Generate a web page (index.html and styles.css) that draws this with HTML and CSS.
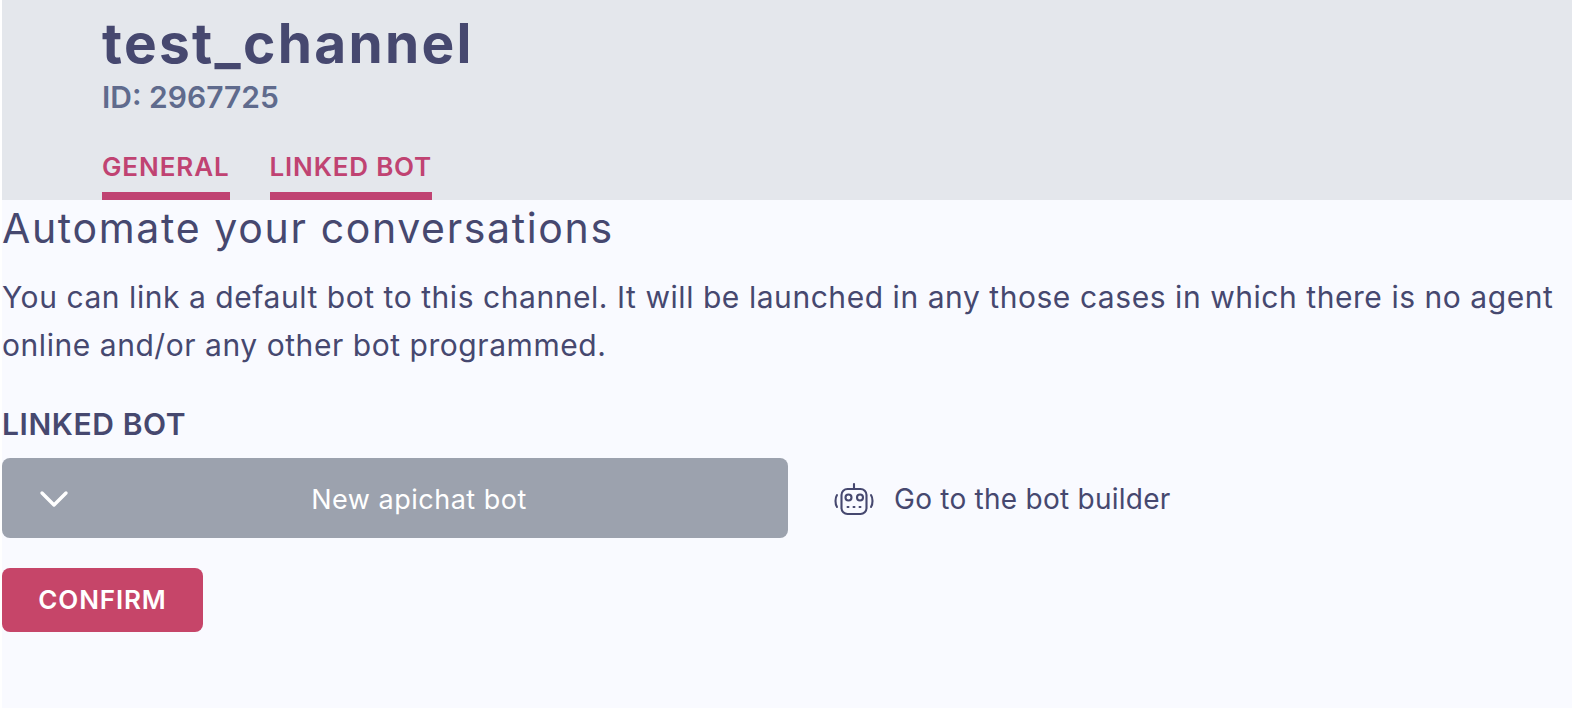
FILE: index.html
```html
<!DOCTYPE html>
<html lang="en">
<head>
<meta charset="utf-8">
<title>test_channel</title>
<link rel="stylesheet" href="styles.css">
</head>
<body>
<div class="page">
  <header class="head">
    <h1 class="title">test_channel</h1>
    <div class="id">ID: 2967725</div>
    <nav class="tabs">
      <a class="tab">GENERAL</a>
      <a class="tab">LINKED BOT</a>
    </nav>
  </header>
  <main class="content">
    <h2 class="heading">Automate your conversations</h2>
    <p class="desc">You can link a default bot to this channel. It will be launched in any those cases in which there is no agent online and/or any other bot programmed.</p>
    <div class="label">LINKED BOT</div>
    <div class="row">
      <div class="select">
        <svg class="chev" width="30" height="18" viewBox="0 0 30 18"><path d="M3 3l12 12L27 3" fill="none" stroke="#fff" stroke-width="3.4" stroke-linecap="round" stroke-linejoin="round"/></svg>
        <span class="value">New apichat bot</span>
      </div>
      <a class="builder">
        <svg class="robot" width="42" height="34" viewBox="0 0 42 34" fill="none" stroke="#46486f" stroke-width="2.1" stroke-linecap="round">
          <path d="M21 2v5"/>
          <rect x="8.500" y="7" width="25" height="25" rx="6"/>
          <circle cx="15.500" cy="15.500" r="3"/>
          <circle cx="27" cy="15.500" r="3"/>
          <path d="M14.500 25h1M20.500 25h1M26.500 25h1" stroke-width="2"/>
          <path d="M4 13c-2 3-2 9 0 12M38 13c2 3 2 9 0 12"/>
        </svg>
        <span>Go to the bot builder</span>
      </a>
    </div>
    <button class="confirm">CONFIRM</button>
  </main>
</div>
</body>
</html>
```

FILE: styles.css
```css
* { box-sizing: border-box; }
html, body { margin: 0; padding: 0; background: #fff; }
body { font-family: "Inter", "Noto Sans", sans-serif; color: #46486f; }
.page { margin-left: 2px; height: 708px; background: #f9faff; }
.head { height: 200px; background: #e4e7ec; padding: 14px 0 0 100px; display: flex; flex-direction: column; }
.title { margin: 0; font-size: 55px; line-height: 58px; font-weight: 700; color: #46486f; letter-spacing: 2.3px; }
.id { margin-top: 7px; font-size: 30px; line-height: 36px; font-weight: 600; color: #5f6b8d; }
.tabs { display: flex; gap: 40px; margin-top: auto; }
.tab { height: 52px; padding-top: 3px; border-bottom: 8px solid #c04372; color: #c04372; font-size: 26px; line-height: 32px; font-weight: 600; letter-spacing: 0.8px; }
.tab:first-child { letter-spacing: 0.9px; }
.content { padding-top: 5px; }
.heading { margin: 0; font-size: 41px; line-height: 46px; font-weight: 400; letter-spacing: 1.65px; }
.desc { margin: 22px 0 0; font-size: 30px; line-height: 48px; font-weight: 400; letter-spacing: 0.55px; }
.label { margin-top: 38px; font-size: 30px; line-height: 34px; font-weight: 600; letter-spacing: 0.6px; }
.row { display: flex; align-items: center; gap: 44px; margin-top: 17px; }
.select { position: relative; width: 786px; height: 80px; padding-left: 48px; padding-top: 2px; border-radius: 8px; background: #9ca2ae; display: flex; align-items: center; justify-content: center; color: #fff; font-size: 27px; letter-spacing: 0.5px; }
.chev { position: absolute; left: 37px; top: 32px; }
.builder { display: flex; align-items: center; gap: 19px; padding: 2px 0 0 1px; font-size: 28px; letter-spacing: 0.25px; }
.confirm { display: block; margin-top: 30px; width: 201px; height: 64px; padding: 0 0 2px; border: 0; border-radius: 8px; background: #c64569; color: #fff; font-family: inherit; font-size: 26px; font-weight: 600; letter-spacing: 0.85px; }
```
